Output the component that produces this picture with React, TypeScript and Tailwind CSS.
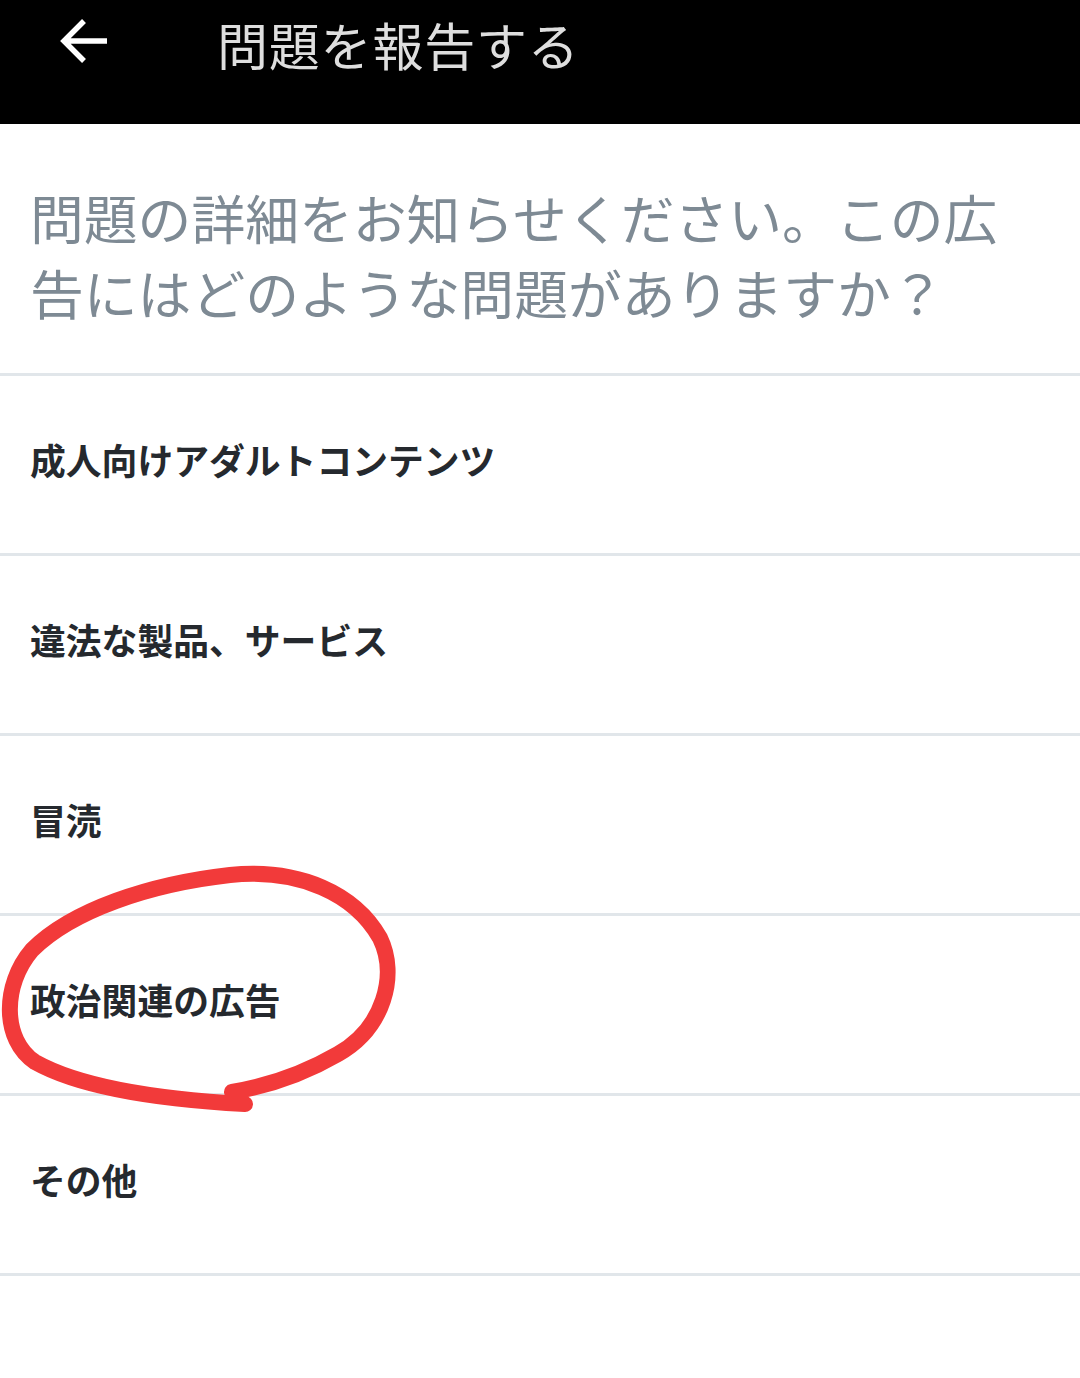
const items = [
  "成人向けアダルトコンテンツ",
  "違法な製品、サービス",
  "冒涜",
  "政治関連の広告",
  "その他",
];

function BackArrow() {
  return (
    <svg width="50" height="48" viewBox="0 0 50 48" fill="none">
      <path
        d="M48 24H5M25 4L5 24l20 20"
        stroke="#ffffff"
        strokeWidth="5.5"
        strokeLinecap="butt"
        strokeLinejoin="miter"
      />
    </svg>
  );
}

export default function App() {
  return (
    <div
      className="relative w-[1080px] h-[1378px] bg-white overflow-hidden"
      style={{ fontFamily: '"Noto Sans CJK JP", "Noto Sans", sans-serif' }}
    >
      <header className="h-[124px] bg-black flex items-start">
        <div className="w-[217px] pl-[59px] pt-[17px]">
          <BackArrow />
        </div>
        <h1 className="pt-[9px] text-[51px] leading-[70px] tracking-[0.8px] font-normal text-[#dedede]">
          問題を報告する
        </h1>
      </header>

      <p className="px-[30px] pt-[55px] pb-[44px] text-[53.8px] leading-[75px] text-[#7e8a94] border-b-[3px] border-[#e1e6ea]">
        問題の詳細をお知らせください。この広告にはどのような問題がありますか？
      </p>

      <ul>
        {items.map((item) => (
          <li
            key={item}
            className="h-[180px] flex items-center px-[30px] pb-[10px] border-b-[3px] border-[#e1e6ea]"
          >
            <span className="text-[35.8px] font-bold text-[#25292e] leading-none">
              {item}
            </span>
          </li>
        ))}
      </ul>

      <svg
        className="absolute top-0 left-0 pointer-events-none"
        width="1080"
        height="1378"
        viewBox="0 0 1080 1378"
        fill="none"
      >
        <path
          d="M245 1104 C170 1100, 85 1090, 35 1062 C2 1040, 2 985, 32 950 C72 910, 150 884, 230 875 C300 868, 355 894, 380 938 C398 975, 384 1028, 338 1054 C300 1076, 262 1087, 232 1092"
          stroke="#f23a3a"
          strokeWidth="16"
          strokeLinecap="round"
          strokeLinejoin="round"
        />
      </svg>
    </div>
  );
}
